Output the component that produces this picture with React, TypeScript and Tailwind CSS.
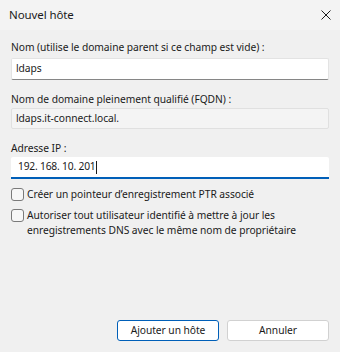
import React from 'react';

const font = { fontFamily: '"Noto Sans", "Segoe UI", sans-serif' };

function Checkbox({ children }: { children: React.ReactNode }) {
  return (
    <label className="flex items-start gap-[3px] leading-[15px] text-[#1b1b1b]">
      <span className="mt-[1px] h-[13px] w-[13px] shrink-0 rounded-[3px] border border-[#7a7a7a] bg-[#f7f7f7]" />
      <span>{children}</span>
    </label>
  );
}

export default function App() {
  return (
    <div style={font} className="flex h-[352px] w-[340px] flex-col bg-[#f0f0f0] text-[#1b1b1b]">
      {/* Title bar */}
      <div className="flex h-[30px] items-center justify-between bg-[#f3f3f3] pl-[9px] pr-[9px]">
        <span className="text-[11.5px] tracking-[-0.1px]">Nouvel hôte</span>
        <svg width="10" height="10" viewBox="0 0 10 10">
          <path d="M0.5 0.5 L9.5 9.5 M9.5 0.5 L0.5 9.5" stroke="#1b1b1b" strokeWidth="1" />
        </svg>
      </div>

      {/* Form */}
      <div className="flex flex-1 flex-col px-[11px] pt-[10px] pb-[11px] text-[10.25px] tracking-[-0.05px]">
        <div className="leading-[15px]">Nom (utilise le domaine parent si ce champ est vide) :</div>
        <div className="mt-[3px] flex h-[22px] items-center rounded-[2px] border border-[#e3e3e3] border-b-[#868686] bg-white pl-[4px]">
          ldaps
        </div>

        <div className="mt-[12px] leading-[15px]">Nom de domaine pleinement qualifié (FQDN) :</div>
        <div className="mt-[1px] flex h-[21px] items-center rounded-[2px] border border-[#e0e0e0] bg-[#f4f4f4] pl-[4px]">
          ldaps.it-connect.local.
        </div>

        <div className="mt-[12px] leading-[15px]">Adresse IP :</div>
        <div className="mt-[1px] flex h-[22px] items-center rounded-t-[2px] border-b-2 border-[#005fb8] bg-white pl-[7px] tracking-[-0.2px]">
          <span>192.</span>
          <span className="ml-[2.5px]">168.</span>
          <span className="ml-[2.5px]">10.</span>
          <span className="ml-[2.5px]">201</span>
          <span className="ml-[1px] h-[13px] w-[1px] bg-[#1b1b1b]" />
        </div>

        <div className="mt-[8px] flex flex-col gap-[6px]">
          <Checkbox>Créer un pointeur d’enregistrement PTR associé</Checkbox>
          <Checkbox>
            Autoriser tout utilisateur identifié à mettre à jour les
            <br />
            enregistrements DNS avec le même nom de propriétaire
          </Checkbox>
        </div>

        <div className="mt-auto flex justify-end gap-[8px]">
          <button className="h-[21px] w-[102px] rounded-[3px] border border-[#005fb8] bg-white">
            Ajouter un hôte
          </button>
          <button className="h-[21px] w-[102px] rounded-[3px] border border-[#d1d1d1] bg-white">
            Annuler
          </button>
        </div>
      </div>
    </div>
  );
}
